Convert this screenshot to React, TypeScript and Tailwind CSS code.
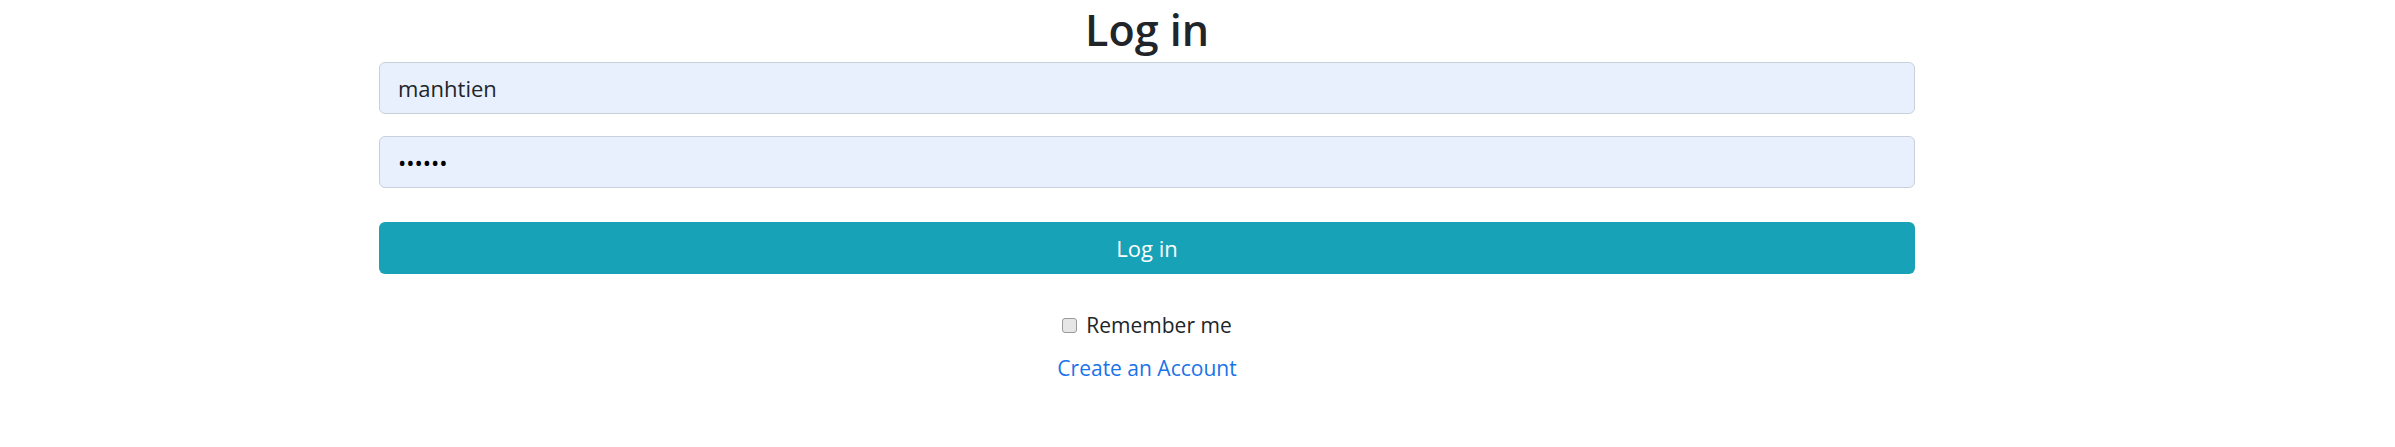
import { useState } from "react";

export default function App() {
    const [remember, setRemember] = useState(false);

    return (
        <div className="min-h-[447px] w-full bg-white font-['Open_Sans',sans-serif] text-[#212529]">
            <div className="ml-[379px] w-[1536px] flex flex-col">
                <h2 className="text-center text-[43px] font-semibold leading-[60px] h-[62px]">Log in</h2>

                <form className="flex flex-col" onSubmit={(e) => e.preventDefault()}>
                    <input
                        type="text"
                        defaultValue="manhtien"
                        className="h-[52px] w-full rounded-[6px] border border-[#c9d0da] bg-[#e8f0fe] px-[18px] text-[22px] text-[#212529] outline-none"
                    />
                    <input
                        type="password"
                        defaultValue="123456"
                        className="mt-[22px] h-[52px] w-full rounded-[6px] border border-[#c9d0da] bg-[#e8f0fe] px-[18px] text-[22px] text-black outline-none"
                    />

                    <button
                        type="submit"
                        className="mt-[34px] h-[52px] w-full rounded-[6px] bg-[#17a2b8] text-[22px] text-white"
                    >
                        Log in
                    </button>

                    {/* remember + register */}
                    <div className="mt-[34px] flex flex-col items-center">
                        <label className="flex items-center gap-[9px] text-[21px] leading-[34px]">
                            <span
                                onClick={() => setRemember(!remember)}
                                className="block h-[15px] w-[15px] rounded-[3px] border border-[#9a9a9a] bg-[#e6e6e6]"
                            >
                                {remember && <span className="block h-full w-full rounded-[2px] bg-[#0075ff]" />}
                            </span>
                            Remember me
                        </label>
                        <a href="#" className="mt-[9px] text-[21px] leading-[34px] text-[#1a73e8]">
                            Create an Account
                        </a>
                    </div>
                </form>
            </div>
        </div>
    );
}
